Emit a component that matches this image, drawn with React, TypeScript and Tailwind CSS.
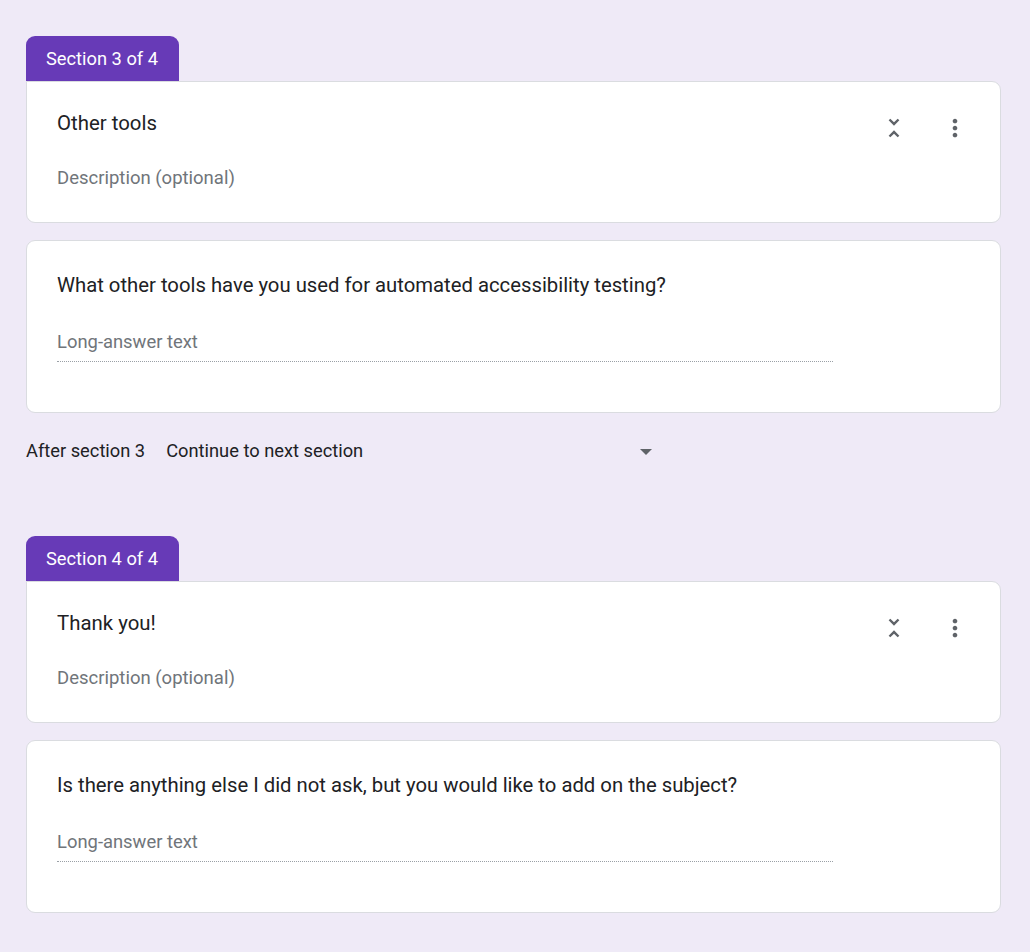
import React from 'react';

const UnfoldLess = () => (
  <svg viewBox="0 0 24 24" className="w-7 h-7 fill-[#5f6368]">
    <path d="M7.41 18.59L8.83 20 12 16.83 15.17 20l1.41-1.41L12 14l-4.59 4.59zm9.18-13.18L15.17 4 12 7.17 8.83 4 7.41 5.41 12 10l4.59-4.59z" />
  </svg>
);

const MoreVert = () => (
  <svg viewBox="0 0 24 24" className="w-7 h-7 fill-[#5f6368]">
    <path d="M12 8c1.1 0 2-.9 2-2s-.9-2-2-2-2 .9-2 2 .9 2 2 2zm0 2c-1.1 0-2 .9-2 2s.9 2 2 2 2-.9 2-2-.9-2-2-2zm0 6c-1.1 0-2 .9-2 2s.9 2 2 2 2-.9 2-2-.9-2-2-2z" />
  </svg>
);

type SectionProps = {
  index: number;
  total: number;
  title: string;
  question: string;
};

const Section: React.FC<SectionProps> = ({ index, total, title, question }) => (
  <div className="flex flex-col">
    {/* Tab */}
    <div className="w-[153px] h-[45px] bg-[#673ab7] rounded-t-[9px] flex items-center pl-5 text-white text-[18.3px]">
      Section {index} of {total}
    </div>

    {/* Header card */}
    <div className="bg-white border border-[#dadce0] rounded-b-[9px] rounded-tr-[9px] h-[142px] pl-[30px] pr-[31px] pt-[27px] flex justify-between">
      <div className="flex flex-col">
        <div className="text-[20.4px] leading-7 text-[#202124]">{title}</div>
        <div className="mt-[29px] text-[18.5px] leading-6 text-[#70757a]">Description (optional)</div>
      </div>
      <div className="flex items-start gap-[33px] mt-[5px]">
        <UnfoldLess />
        <MoreVert />
      </div>
    </div>

    {/* Question card */}
    <div className="mt-[17px] bg-white border border-[#dadce0] rounded-[9px] h-[173px] pl-[30px] pt-[30px]">
      <div className="text-[20.3px] leading-7 text-[#202124]">{question}</div>
      <div className="mt-[31px] w-[776px] pb-[7px] border-b border-dotted border-[#9aa0a6] text-[18.4px] leading-6 text-[#70757a]">
        Long-answer text
      </div>
    </div>
  </div>
);

export default function App() {
  return (
    <div className="min-h-[952px] bg-[#efeaf7] pt-[36px] pl-[26px] pr-[29px] pb-[41px] font-['Roboto',sans-serif]">
      <Section
        index={3}
        total={4}
        title="Other tools"
        question="What other tools have you used for automated accessibility testing?"
      />

      {/* After section navigation */}
      <div className="mt-[26px] h-6 flex items-center text-[18.3px] text-[#202124]">
        <span>After section 3</span>
        <div className="ml-[21px] w-[486px] flex items-center justify-between">
          <span>Continue to next section</span>
          <svg viewBox="0 0 12 6" className="w-3 h-[6px] mt-[2px] fill-[#5f6368]">
            <path d="M0 0h12L6 6z" />
          </svg>
        </div>
      </div>

      <div className="mt-[73px]">
        <Section
          index={4}
          total={4}
          title="Thank you!"
          question="Is there anything else I did not ask, but you would like to add on the subject?"
        />
      </div>
    </div>
  );
}
